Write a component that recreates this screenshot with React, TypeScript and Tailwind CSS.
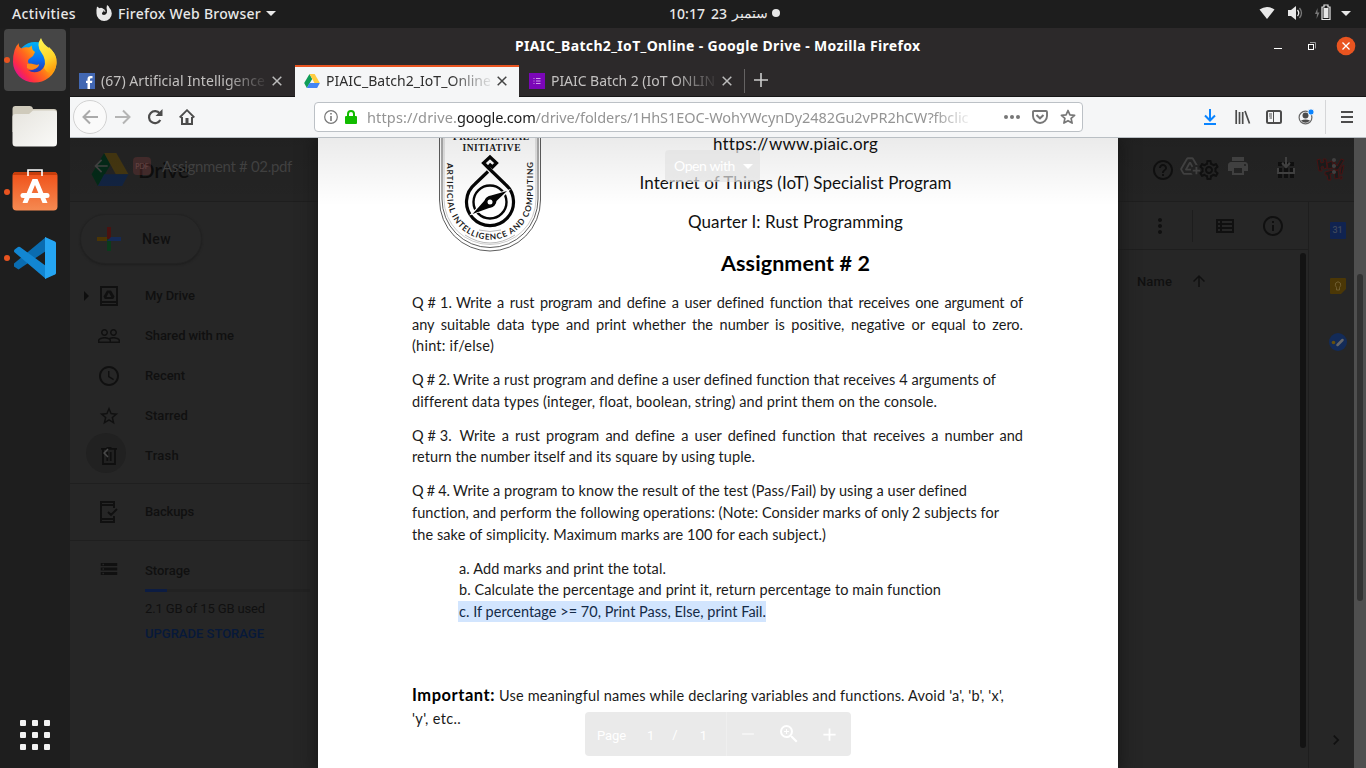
import { useLayoutEffect, useRef, type ReactNode } from "react";
import {
  MdAccessTime, MdAddToDrive, MdApps, MdArrowRight, MdArrowUpward, MdChevronRight,
  MdInfoOutline, MdHelpOutline, MdMoreVert, MdPeopleOutline, MdPrint,
  MdOutlineSettings, MdStarBorder, MdStorage, MdZoomIn, MdArrowBack, MdChevronLeft, MdAdd, MdRemove,
  MdArrowDropDown,
} from "react-icons/md";

/** Single line of text tracked so that it spans exactly `w` pixels. */
function Fit({ w, children, className = "" }: { w: number; children: ReactNode; className?: string }) {
  const ref = useRef<HTMLSpanElement>(null);
  useLayoutEffect(() => {
    const el = ref.current;
    if (!el) return;
    el.style.letterSpacing = "0px";
    const n = (el.textContent || "").length;
    el.style.letterSpacing = `${(w - el.getBoundingClientRect().width) / n}px`;
  }, [w]);
  return <span ref={ref} className={`inline-block whitespace-pre ${className}`}>{children}</span>;
}

function DriveLogo({ className }: { className: string }) {
  return (
    <svg viewBox="0 0 38 34" className={className}>
      <path d="M13 0 0 22l6.500 12L19.500 12z" fill="#0f9d58" />
      <path d="M13 0h12.500L38 22H25z" fill="#ffcd40" />
      <path d="M13 22h25l-6.500 12h-25z" fill="#4285f4" />
    </svg>
  );
}

function TopBar() {
  return (
    <div className="grid h-7 grid-cols-[600px_1fr_110px] items-center bg-[#1d1d1d] text-[14px] font-medium text-[#e8e8e8]">
      <div className="flex items-center pb-[2px] pl-3">
        <Fit w={64}>Activities</Fit>
        <svg viewBox="0 0 16 16" className="ml-5 size-4">
          <path fill="#e8e8e8" fillRule="evenodd" d="M1 1.500 3.500 3.300Q5 2.300 6.500 3.300L9 5 7 6.800Q5.500 7.800 6 9.300 8 10.500 9.500 9.500 11.500 8 11 5.500 10 4 11 0 13 1 13.500 3Q16 5 15.800 8.500A7.500 7.300 0 0 1 .5 8.500Q.3 4 1 1.500M7 6l2-1 .5 2z" />
        </svg>
        <Fit w={143} className="ml-[6px]">Firefox Web Browser</Fit>
        <svg viewBox="0 0 10 5" className="ml-[5px] h-[5px] w-[10px]"><path fill="#e8e8e8" d="M0 0h10L5 5z" /></svg>
      </div>
      <div className="flex items-center pb-[2px] pl-[69px]">
        <Fit w={36}>10:17</Fit>
        <Fit w={16} className="ml-[6px]">23</Fit>
        <span dir="rtl" className="ml-[5px] text-[13.500px] font-normal">ستمبر</span>
        <i className="ml-[4px] size-2 rounded-full bg-[#e8e8e8]" />
      </div>
      <svg viewBox="0 0 110 28" className="h-7 w-[110px]">
        <path d="M3.500 9.500Q11 4.500 18.500 9.500L11 19z" fill="#e8e8e8" />
        <path d="M32 10h3l5-4v14l-5-4h-3z" fill="#e8e8e8" />
        <path d="M41.500 10q2.500 3 0 6" stroke="#e8e8e8" fill="none" strokeWidth="1.300" />
        <path d="M43.500 8q4 5 0 10" stroke="#777" fill="none" strokeWidth="1.300" />
        <path d="M61.500 8 59 14h2l-.5 5 3-6.500h-2z" fill="#777" />
        <path d="M66 7h2V5h4v2h2v12.500h-8z" stroke="#e8e8e8" fill="none" strokeWidth="1.200" />
        <path d="M67.500 8h5v10h-5z" fill="#e8e8e8" />
        <path d="M85 11h10l-5 5z" fill="#e8e8e8" />
      </svg>
    </div>
  );
}

function FirefoxLogo() {
  return (
    <svg viewBox="0 0 44 46" className="h-[46px] w-11">
      <defs>
        <linearGradient id="fxBody" x1="1" y1=".1" x2=".1" y2=".8">
          <stop offset="0" stopColor="#fff44f" /><stop offset=".35" stopColor="#ffb40d" />
          <stop offset=".6" stopColor="#ff6a1c" /><stop offset=".85" stopColor="#ff2d43" /><stop offset="1" stopColor="#e31587" />
        </linearGradient>
        <linearGradient id="fxGlobe" x1="0" y1="0" x2="0" y2="1">
          <stop offset="0" stopColor="#00b3f4" /><stop offset=".5" stopColor="#0a6ef0" /><stop offset="1" stopColor="#3a1c8c" />
        </linearGradient>
        <linearGradient id="fxFlame" x1=".3" y1="0" x2=".6" y2="1">
          <stop offset="0" stopColor="#fff44f" /><stop offset=".6" stopColor="#ffd52a" /><stop offset="1" stopColor="#ff9a0d" />
        </linearGradient>
      </defs>
      <circle cx="22" cy="23" r="18" fill="url(#fxGlobe)" />
      <path fill="url(#fxBody)" d="M6 6Q5 10 8.500 11.500 12 9.500 16 10.500L19 8.500Q18 12 22 15L20 19 16 22Q14 24 16 27L25 28Q27 28 23 31.500 19 34 15 33 20 37 27 34 35 28 32 19L36 10Q44 17 43.500 27A21.800 20.500 0 0 1 0 25Q0 11 6 6" />
      <path fill="url(#fxFlame)" d="M28 1Q23 8 28 15q6 8 3 16 5 8 10 3 3-5 2.500-12Q42 15 36 11 30 7 28 1" />
      <path fill="#ff8a16" d="M14 27q4-1 7 .5 3 1 5-.5 0 3-4 4.500-4 2-8-.5z" />
    </svg>
  );
}

function DockItem({ running, active, children }: { running?: boolean; active?: boolean; children: ReactNode }) {
  return (
    <div className={`relative flex h-[62px] w-[62px] items-center justify-center rounded ${active ? "bg-[#464646]" : ""}`}>
      {running && <i className="absolute left-0 top-[28px] size-[6px] rounded-full bg-[#e95420]" />}
      {children}
    </div>
  );
}

function Dock() {
  return (
    <div className="flex w-[70px] shrink-0 flex-col items-center bg-[#1e1e1e] pt-px">
      <div className="flex flex-1 flex-col gap-1">
        <DockItem running active><FirefoxLogo /></DockItem>
        <DockItem>
          <svg viewBox="0 0 46 42" className="h-[42px] w-[46px]">
            <defs><linearGradient id="fold" x1="0" y1="0" x2="1" y2="1"><stop offset="0" stopColor="#e6e4de" /><stop offset="1" stopColor="#fafaf8" /></linearGradient></defs>
            <path d="M.5 4q0-3 3-3h14q3 0 3.500 3h21q3 0 3 3v20H.5z" fill="#cfcabb" />
            <path d="M.5 12q0-3 3-3H17l4-3.500h21q3 0 3 3V38q0 3.500-3.500 3.500H4Q.5 41.500.5 38z" fill="url(#fold)" />
          </svg>
        </DockItem>
        <DockItem running>
          <svg viewBox="0 0 46 42" className="mb-[4px] h-[42px] w-[46px]">
            <defs><linearGradient id="soft" x1="0" y1="0" x2="0" y2="1"><stop offset="0" stopColor="#f05018" /><stop offset="1" stopColor="#f58a52" /></linearGradient></defs>
            <rect x=".5" y="3" width="45" height="38.500" rx="4" fill="url(#soft)" />
            <path d="M1 6q0-3 3-3h38q3 0 3 3z" fill="#c73e0c" />
            <path d="M16 7V1h14v6" fill="none" stroke="#fff" strokeWidth="1.600" />
            <path d="M10.500 34 20.500 10h5l10 24h-5L23 16l-7.500 18z" fill="#fff" />
            <rect x="8.500" y="24" width="29" height="5" rx="2.500" fill="#fff" />
          </svg>
        </DockItem>
        <DockItem running>
          <svg viewBox="0 0 42 42" className="size-[42px]">
            <path d="M0 29.500 4.500 32.500 32 14V0L0 26.500z" fill="#0a6cb0" />
            <path d="M0 14q0-1 1-1.800L4 10q1-.5 2 0l26 19v13L.8 15.500Q0 15 0 14" fill="#1286d2" />
            <path d="M31 0 41 4.500q1 .5 1 1.500v30q0 1-1 1.500L31 42z" fill="#25a5f2" />
          </svg>
        </DockItem>
      </div>
      <div className="mb-[18px] grid grid-cols-3 gap-[6px]">
        {Array.from({ length: 9 }, (_, i) => <i key={i} className="size-[6px] rounded-[1px] bg-[#f4f4f4]" />)}
      </div>
    </div>
  );
}

function Close({ className }: { className: string }) {
  return <svg viewBox="0 0 10 10" className={`size-[10px] ${className}`}><path d="m.7.7 8.600 8.600M9.300.7.7 9.300" stroke="currentColor" strokeWidth="1.500" /></svg>;
}

function Tab({ icon, title, w, active }: { icon: ReactNode; title: string; w: number; active?: boolean }) {
  return (
    <div className={`flex h-8 items-center border-t-2 pb-px pl-[9px] text-[14px] ${active ? "w-[224px] border-[#e95420] bg-[#f5f6f7] text-[#2e2e2e]" : "w-[225px] border-transparent text-[#c3c1c0]"}`}>
      {icon}
      <span className="mb-px ml-[6px] w-[165px] overflow-hidden [mask-image:linear-gradient(to_right,#000_75%,transparent_102%)]"><Fit w={w}>{title}</Fit></span>
      <Close className={`ml-[6px] ${active ? "text-[#444]" : "text-[#bbb]"}`} />
    </div>
  );
}

function WindowHeader() {
  return (
    <div className="bg-[#2c292a]">
      <div className="flex h-[37px] items-center text-white">
        <div className="flex flex-1 pb-[2px] pl-[445px] text-[14px] font-bold"><Fit w={405.5}>PIAIC_Batch2_IoT_Online - Google Drive - Mozilla Firefox</Fit></div>
        <svg viewBox="0 0 100 37" className="h-[37px] w-[100px]">
          <path d="M8 20.500h8" stroke="#fff" />
          <path d="M44 14.500h5.500v6" fill="none" stroke="#999" />
          <rect x="42.500" y="16.500" width="5" height="5" fill="none" stroke="#fff" />
          <circle cx="80" cy="18" r="9.300" fill="#e95420" />
          <path d="m76.500 14.500 7 7m0-7-7 7" stroke="#fff" strokeWidth="1.300" />
        </svg>
      </div>
      <div className="flex h-8 items-center border-b border-[#161616] bg-[#2c292a]">
        <Tab w={164} title="(67) Artificial Intelligence" icon={<svg viewBox="0 0 16 16" className="size-4"><path fill="#4267b2" d="M0 0h16v16H0z" /><path fill="#fff" d="M8.500 16v-6H7V7.700h1.500V6q0-3 3-3h2v2.300H12q-1 0-1 1v1.400h2.400L13 10h-2v6z" /></svg>} />
        <Tab active w={165} title="PIAIC_Batch2_IoT_Online" icon={<DriveLogo className="h-[14px] w-4" />} />
        <Tab w={164} title="PIAIC Batch 2 (IoT ONLIN" icon={<svg viewBox="0 0 16 16" className="ml-px size-4"><path fill="#7b06b8" d="M0 0h16v16H0z" /><path stroke="#e6c8f5" strokeWidth=".8" d="M4.500 5.500h1M7 5.500h4.500M4.500 8h1M7 8h4.500M4.500 10.500h1M7 10.500h4.500" /></svg>} />
        <i className="h-6 w-px bg-[#656363]" />
        <svg viewBox="0 0 14 14" className="mb-px ml-[9px] size-[14px]"><path d="M7 0v14M0 7h14" stroke="#ccc" strokeWidth="1.600" /></svg>
      </div>
    </div>
  );
}

function Tool({ children }: { children: ReactNode }) {
  return <div className="flex w-8 shrink-0 justify-center">{children}</div>;
}

function NavBar() {
  return (
    <div className="flex h-[41px] items-center border-b border-[#b9bfc4] bg-[#f5f6f7] pl-[3px] text-[#4c4c4c]">
      <div className="flex size-[34px] items-center justify-center rounded-full border border-[#d2d2d2] bg-[#fafafa]">
        <svg viewBox="0 0 16 16" className="size-4"><path d="M16 8H1.500M8 1.500 1.500 8 8 14.500" fill="none" stroke="#aaa" strokeWidth="2" /></svg>
      </div>
      <Tool><svg viewBox="0 0 16 16" className="size-4"><path d="M0 8h14.500M8 1.500 14.500 8 8 14.500" fill="none" stroke="#b4b4b4" strokeWidth="2" /></svg></Tool>
      <Tool><svg viewBox="0 0 16 16" className="size-4"><path d="M12.800 4.500A6 6 0 1 0 13.300 11" fill="none" stroke="#4c4c4c" strokeWidth="2.200" /><path d="M15.500 0v7h-7z" fill="#4c4c4c" /></svg></Tool>
      <Tool><svg viewBox="0 0 16 16" className="size-4"><path d="M.7 8.500 8 1.200l7.300 7.300" fill="none" stroke="#4c4c4c" strokeWidth="1.800" /><path d="M3 8v7h10V8" fill="none" stroke="#4c4c4c" strokeWidth="2" /><path d="M6.500 15V9h3v6z" fill="#4c4c4c" /></svg></Tool>
      <div className="ml-[111px] flex h-[30px] w-[769px] items-center rounded border border-[#bcc1c6] bg-white pl-[9px] text-[14.500px] text-[#949494]">
        <svg viewBox="0 0 14 14" className="size-[14px]"><circle cx="7" cy="7" r="6.300" fill="none" stroke="#777" strokeWidth="1.200" /><path d="M6.200 3h1.600v1.600H6.200zM6.200 6h1.600v5H6.200z" fill="#777" /></svg>
        <svg viewBox="0 0 12 14" className="ml-[7px] h-[14px] w-3"><path d="M3 7V4a3 3 0 0 1 6 0v3" fill="none" stroke="#12bc00" strokeWidth="2" /><rect y="6" width="12" height="8" rx="1" fill="#12bc00" /></svg>
        <div className="ml-[10px] flex w-[602px] overflow-hidden pt-px [mask-image:linear-gradient(to_right,#000_94%,transparent_101%)]">
          <Fit w={90}>https://drive.</Fit><Fit w={78.5} className="text-[#1c1c1c]">google.com</Fit><Fit w={433}>/drive/folders/1HhS1EOC-WohYWcynDy2482Gu2vPR2hCW?fbclic</Fit>
        </div>
        <svg viewBox="0 0 16 4" className="ml-[35px] h-1 w-4"><circle cx="2" cy="2" r="2" fill="#777" /><circle cx="8" cy="2" r="2" fill="#777" /><circle cx="14" cy="2" r="2" fill="#777" /></svg>
        <svg viewBox="0 0 16 14" className="ml-3 h-[14px] w-4"><path d="M1 2q0-1 1-1h12q1 0 1 1v4a7 7 0 0 1-14 0z" fill="none" stroke="#777" strokeWidth="1.900" /><path d="m4.500 5 3.500 3.300L11.500 5" fill="none" stroke="#777" strokeWidth="2" /></svg>
        <svg viewBox="0 0 16 16" className="ml-3 size-4"><path d="m8 1.500 1.900 4.300 4.700.5-3.500 3.100 1 4.700L8 11.700 3.900 14.100l1-4.700L1.400 6.300l4.700-.5z" fill="none" stroke="#777" strokeWidth="1.700" strokeLinejoin="round" /></svg>
      </div>
      <div className="ml-[111px] flex items-center">
        <Tool><svg viewBox="0 0 12 16" className="h-4 w-3"><path d="M6 0v11M1 6.500l5 5 5-5M0 15h12" fill="none" stroke="#0a84ff" strokeWidth="2" /></svg></Tool>
        <Tool><svg viewBox="0 0 16 14" className="ml-px h-[14px] w-4"><path d="M1.200 0v14M4.500 2v12M7.700 2v12M10 1l4.500 12.500" fill="none" stroke="#4c4c4c" strokeWidth="1.700" /></svg></Tool>
        <Tool><svg viewBox="0 0 16 14" className="h-[14px] w-4"><rect x="1" y="1" width="14" height="12" rx="1.500" fill="none" stroke="#4c4c4c" strokeWidth="2" /><path d="M7.500 1v12M3 4h3M3 6h3M3.500 8H6" stroke="#4c4c4c" /></svg></Tool>
        <Tool><svg viewBox="0 0 16 16" className="size-4"><circle cx="7.500" cy="8.500" r="6.400" fill="none" stroke="#666" strokeWidth="1.200" /><circle cx="7.500" cy="6.500" r="3" fill="#4c4c4c" /><path d="M3 11.500q4.500-2 9 0-4.500 4.500-9 0" fill="#4c4c4c" /><circle cx="13" cy="3" r="3" fill="#0a84ff" stroke="#f5f6f7" strokeWidth=".8" /></svg></Tool>
        <i className="ml-[3px] h-[34px] w-px bg-[#d5d6d8]" />
        <div className="ml-[15px] flex flex-col gap-[3px]"><i className="h-[2px] w-3 bg-[#4c4c4c]" /><i className="h-[2px] w-3 bg-[#4c4c4c]" /><i className="h-[2px] w-3 bg-[#4c4c4c]" /></div>
      </div>
    </div>
  );
}

function SideRow({ icon, label, w, arrow }: { icon: ReactNode; label: string; w: number; arrow?: boolean }) {
  return (
    <div className="flex h-10 items-center">
      <span className="flex w-7 justify-end text-[#0e0e0e]">{arrow && <MdArrowRight className="size-6" />}</span>
      <span className="flex w-[22px] justify-center">{icon}</span>
      <Fit w={w} className="ml-[25px]">{label}</Fit>
    </div>
  );
}

/** Drive's file browser, as it looks below the viewer's shade. */
function DrivePage() {
  return (
    <div className="flex h-full w-[1284px] flex-col font-[Roboto,sans-serif] text-[13px] font-medium text-[#101010]">
      <div className="flex h-16 items-center border-b border-[#1e1e1e] bg-[#242424] pl-[21px]">
        <DriveLogo className="h-[33px] w-[38px] brightness-[.27]" />
        <span className="ml-[9px] font-[Lato,sans-serif] text-[22px] font-medium text-[#0d0d0d]"><Fit w={51}>Drive</Fit></span>
        <div className="flex flex-1 items-center pl-[962px]">
          <MdHelpOutline className="size-6 shrink-0" />
          <MdOutlineSettings className="ml-[22px] size-6 shrink-0" />
          <MdApps className="ml-[53px] size-6 shrink-0" />
          <svg viewBox="0 0 30 24" className="ml-[18px] h-6 w-[30px] shrink-0"><g fill="#1b1b1b" stroke="#4a1414" strokeWidth="1"><path d="m1 2 3-1 1 4 3-1-1-3 3 0 1 9-3 1-1-3-2 1 1 4-3 0zM11 5l5-2 1 7-5 1zM18 3l3 5 4-7 3 1-6 10-3 0zM9 14l8-2 0 3-3 1 1 6-3 0-1-5-2 0zM18 13l4-1 1 8-4 1zM25 9l3-2-2 9-2 0zM24 19l2-1 0 3-2 0z" /></g></svg>
        </div>
      </div>
      <div className="flex min-h-0 flex-1">
        <div className="w-[240px] pt-[12px]">
          <div className="ml-[10px] flex h-[50px] w-[122px] items-center rounded-full border border-[#222] bg-[#272727] pl-[16px] shadow-[0_1px_2px_#1e1e1e]">
            <svg viewBox="0 0 24 24" className="size-6"><path d="M10 0h4v12h-4z" fill="#4a1210" /><path d="M10 12h4v12h-4z" fill="#0b3b1c" /><path d="M0 10h10v4H0z" fill="#4b3505" /><path d="M14 10h10v4H10z" fill="#152a56" /></svg>
            <Fit w={29} className="ml-[21px] text-[14px]">New</Fit>
          </div>
          <div className="mt-[12px] flex flex-col">
            <SideRow arrow w={50} label="My Drive" icon={<svg viewBox="0 0 18 20" className="h-5 w-[18px]"><path d="M1 1h16v18H1zM1 16h16" fill="none" stroke="currentColor" strokeWidth="1.800" /><path d="m7 4.500-3.500 6 1.300 2.500h8.400l1.300-2.500-3.500-6zm1.800 2 2.500 4.500H6.500z" fill="currentColor" fillRule="evenodd" /></svg>} />
            <SideRow w={89} label="Shared with me" icon={<MdPeopleOutline className="size-6 shrink-0" />} />
            <SideRow w={40} label="Recent" icon={<MdAccessTime className="size-6 shrink-0" />} />
            <SideRow w={43} label="Starred" icon={<MdStarBorder className="size-[22px]" />} />
            <SideRow w={34} label="Trash" icon={<svg viewBox="0 0 16 18" className="h-[18px] w-4"><path d="M0 1.800h16M5.500 1h5M2 2v15h12V2M6.300 5v9M9.700 5v9" fill="none" stroke="currentColor" strokeWidth="1.800" /></svg>} />
          </div>
          <div className="mt-[7px] border-y border-[#1f1f1f] py-[8px]">
            <SideRow w={49} label="Backups" icon={<svg viewBox="0 0 18 22" className="h-[22px] w-[18px]"><path d="M14 7V1H1v20h13v-6M1 4h13M1 18h13M8 11l3 3 6-6" fill="none" stroke="currentColor" strokeWidth="1.900" /></svg>} />
          </div>
          <div className="flex pl-[30px] pt-5">
            <MdStorage className="mt-[-3px] size-[22px] w-[18px] scale-x-110" />
            <div className="ml-[27px] flex-1 leading-5">
              <Fit w={45}>Storage</Fit>
              <div className="mt-[8px] h-[3px] w-[165px] bg-[#222]"><div className="h-full w-[22px] bg-[#0c1c42]" /></div>
              <Fit w={120} className="mt-[7px] font-normal">2.1 GB of 15 GB used</Fit>
              <Fit w={119} className="mt-[5px] text-[#07193a]">UPGRADE STORAGE</Fit>
            </div>
          </div>
        </div>
        <div className="flex flex-1 flex-col pl-[808px]">
          <div className="flex h-12 items-center border-b border-[#1e1e1e] pl-[30px]">
            <MdMoreVert className="size-6" />
            <i className="ml-5 h-8 w-px bg-[#1d1d1d]" />
            <svg viewBox="0 0 18 14" className="ml-[23px] h-[14px] w-[18px]"><path d="M0 0h18v14H0zM2 2v2h2V2zm4 0v2h10V2zM2 6v2h2V6zm4 0v2h10V6zM2 10v2h2v-2zm4 0v2h10v-2z" fill="currentColor" fillRule="evenodd" /></svg>
            <MdInfoOutline className="ml-[27px] size-6" />
          </div>
          <div className="flex min-h-0 flex-1 justify-between">
            <div className="flex h-[63px] items-center pl-[19px]"><Fit w={35}>Name</Fit><MdArrowUpward className="mb-px ml-[18px] size-[18px]" /></div>
            <i className="mr-[2px] mt-[3px] h-[495px] w-[6px] rounded-full bg-[#131313]" />
          </div>
        </div>
        <div className="flex w-[46px] flex-col items-center border-l border-[#1e1e1e] pl-[12px] pt-5">
          <span className="flex h-[17px] w-4 items-center justify-center rounded-[1px] bg-[#102350] text-[9px] text-[#3e485c]">31</span>
          <svg viewBox="0 0 16 16" className="mt-[39px] size-4"><path d="M1 0h14q1 0 1 1v10l-5 5H1q-1 0-1-1V1q0-1 1-1" fill="#4b3706" /><path d="M6.500 9.500Q4.500 7.500 5.700 5q2.300-2.500 4.600 0 1.200 2.500-.8 4.500v2.500h-3z" fill="none" stroke="#77663a" strokeWidth=".8" /></svg>
          <svg viewBox="0 0 18 18" className="mt-[39px] size-[18px] shrink-0"><circle cx="9" cy="9" r="9" fill="#132b58" /><path d="m8.500 12 5-5" stroke="#66676a" strokeWidth="2.500" strokeLinecap="round" /><circle cx="4.500" cy="9.500" r="1.800" fill="#67500b" /></svg>
          <div className="flex-1" />
          <MdChevronRight className="mb-[18px] mr-[3px] size-5" />
        </div>
      </div>
    </div>
  );
}

function Emblem() {
  return (
    <svg viewBox="424 138 132 130" className="h-[130px] w-[132px]">
      <g fill="none" stroke="#333" strokeWidth=".8">
        <path d="M439.500 138v62a50.500 51 0 0 0 101 0v-62M442 138v61a48 48.500 0 0 0 96 0v-61" />
        <path d="M444 138v61a46 45.500 0 0 0 92 0v-61" stroke="#999" strokeWidth=".5" />
        <path d="M465 235q25 16 50 0M479 230q11 3 22 0" stroke="#888" strokeWidth=".6" />
      </g>
      <g fontFamily="Liberation Serif" fontWeight="700" fill="#222" textAnchor="middle">
        <text x="491" y="139.800" fontSize="9.500" textLength="76">PRESIDENTIAL</text>
        <text x="491.500" y="150.500" fontSize="9.500" textLength="58">INITIATIVE</text>
      </g>
      <path id="rim" d="M447.300 163v34a42.700 42.700 0 0 0 85.400 0v-36" fill="none" />
      <text fontFamily="Lato" fontWeight="700" fontSize="8.200" fill="#1b1b1b"><textPath href="#rim" textLength="203">ARTIFICIAL INTELLIGENCE AND COMPUTING</textPath></text>
      <g fill="none" stroke="#050505">
        <path d="m488 171.500-13 12.500A23.500 23.500 0 1 0 505 184l-16-15.500-5.500-5.500 6.500-6 6.500 6-4 4-3.500-3" strokeWidth="3.200" />
        <circle cx="490" cy="202" r="16.500" strokeWidth="2.400" />
      </g>
      <path d="m472.500 213.500 13-13.500 4.500-4 17.500-5L495 204l-4.500 4z" stroke="#fff" fill="#fff" strokeWidth="2" />
      <path d="M472.500 214 485 200q1.500-4 6-4.500L507 191l-10.500 10q-.5 5-6 6.500z" fill="#050505" />
      <circle cx="490" cy="202" r="5.500" fill="#050505" />
      <circle cx="490" cy="202" r="2.500" fill="#fff" />
    </svg>
  );
}

function DocumentPage() {
  const justify = "text-justify [text-align-last:justify]";
  return (
    <div className="h-[630px] w-[800px] bg-white font-[Lato,sans-serif] text-[14.500px] leading-[21.600px] text-[#1a1a1a] [font-variant-ligatures:none]">
      <div className="flex h-[154px] pl-[106px]">
        <Emblem />
        <div className="flex flex-1 flex-col items-center pr-[83px] text-[17px] leading-6 text-[#111]">
          <div className="mt-[-6px]"><Fit w={165}>https://www.piaic.org</Fit></div>
          <div className="mt-[14.500px]"><Fit w={312}>Internet of Things (IoT) Specialist Program</Fit></div>
          <div className="mt-[15px]"><Fit w={215}>Quarter I: Rust Programming</Fit></div>
          <div className="mt-[17px] text-[21.500px] font-bold text-black"><Fit w={149}>Assignment # 2</Fit></div>
        </div>
      </div>
      <div className="flex flex-col gap-[12.400px] pl-[94px]">
        <div>
          <p className="flex w-[611px]"><Fit w={44}>Q # 1. </Fit><span className={`flex-1 whitespace-nowrap tracking-[-0.1px] ${justify}`}>Write a rust program and define a user defined function that receives one argument of</span></p>
          <p className={`w-[611px] whitespace-nowrap ${justify}`}>any suitable data type and print whether the number is positive, negative or equal to zero.</p>
          <p><Fit w={82}>(hint: if/else)</Fit></p>
        </div>
        <div>
          <p><Fit w={41}>Q # 2. </Fit><Fit w={543}>Write a rust program and define a user defined function that receives 4 arguments of</Fit></p>
          <p><Fit w={525}>different data types (integer, float, boolean, string) and print them on the console.</Fit></p>
        </div>
        <div>
          <p className="flex w-[611px]"><Fit w={47.5}>Q # 3.  </Fit><span className={`flex-1 whitespace-nowrap ${justify}`}>Write a rust program and define a user defined function that receives a number and</span></p>
          <p><Fit w={343}>return the number itself and its square by using tuple.</Fit></p>
        </div>
        <div>
          <p><Fit w={41}>Q # 4. </Fit><Fit w={514}>Write a program to know the result of the test (Pass/Fail) by using a user defined</Fit></p>
          <p><Fit w={587}>function, and perform the following operations: (Note: Consider marks of only 2 subjects for</Fit></p>
          <p><Fit w={414}>the sake of simplicity. Maximum marks are 100 for each subject.)</Fit></p>
        </div>
        <div className="pl-[47px]">
          <p><Fit w={207}>a. Add marks and print the total.</Fit></p>
          <p><Fit w={482}>b. Calculate the percentage and print it, return percentage to main function</Fit></p>
          <p className="ml-[-1px] w-[308px] bg-[#d2e5fe] pl-px text-[#152b47]"><Fit w={307}>c. If percentage &gt;= 70, Print Pass, Else, print Fail.</Fit></p>
        </div>
        <div className="mt-[49px] leading-[23.500px]">
          <p><Fit w={83} className="text-[16.500px] font-bold text-black">Important:</Fit><Fit w={505} className="ml-[4px]">Use meaningful names while declaring variables and functions. Avoid 'a', 'b', 'x',</Fit></p>
          <p><Fit w={49}>'y', etc..</Fit></p>
        </div>
      </div>
    </div>
  );
}

function Viewer() {
  return (
    <>
      <div className="absolute left-[248px] top-0 shadow-[0_0_14px_4px_#1a1a1a]"><DocumentPage /></div>
      <div className="absolute left-0 top-0 h-[68px] w-[1284px] bg-gradient-to-b from-black/8 to-transparent" />
      <div className="absolute left-0 top-[12px] flex h-8 w-[1284px] items-center font-[Lato,sans-serif] text-[15px] text-[#404040]">
        <MdArrowBack className="ml-[21px] size-5 shrink-0" />
        <span className="ml-[22px] flex size-[18px] shrink-0 items-center justify-center rounded-sm bg-[#7a3838]/35 text-[7px] text-[#6a4848]">PDF</span>
        <Fit w={130} className="ml-[11px]">Assignment # 02.pdf</Fit>
        <div className="ml-[373px] flex h-8 w-[95px] shrink-0 items-center rounded-sm bg-[#e3e3e3]/70 pb-px pl-[9px] text-[14px] text-white"><Fit w={61}>Open with</Fit><MdArrowDropDown className="ml-px size-6" /></div>
        <MdAddToDrive className="ml-[419px] size-[22px] shrink-0" />
        <MdPrint className="ml-[25px] size-6 shrink-0" />
        <svg viewBox="0 0 20 18" className="ml-[26px] h-[18px] w-5 shrink-0"><path d="M10 0v9M6 6l4 4 4-4M2 11v5h16v-5" fill="none" stroke="currentColor" strokeWidth="2" /></svg>
        <MdMoreVert className="ml-[26px] size-6 shrink-0" />
      </div>
      <div className="absolute left-4 top-[295px] flex size-10 items-center justify-center rounded-full bg-[#101010]/20 text-[#4a4a4a]"><MdChevronLeft className="size-[18px]" /></div>
      <div className="absolute left-[515px] top-[574px] flex h-11 w-[266px] items-center rounded-sm bg-[#eaeaea] font-[Roboto,sans-serif] text-[13px] text-white">
        <Fit w={29} className="ml-3 mt-[3px]">Page</Fit>
        <span className="ml-[21px] mt-[3px]">1</span><span className="ml-[18px] mt-[2px]">/</span><span className="ml-[22px] mt-[3px]">1</span>
        <i className="ml-[19px] h-11 w-px bg-[#efefef]" />
        <MdRemove className="ml-[11px] size-5 opacity-60" />
        <MdZoomIn className="ml-[19px] size-6" />
        <MdAdd className="ml-[18px] size-[21px]" />
      </div>
    </>
  );
}

export default function App() {
  return (
    <div className="flex h-[768px] w-[1366px] flex-col overflow-hidden bg-[#1e1e1e] font-['Noto_Sans',sans-serif]">
      <TopBar />
      <div className="flex min-h-0 flex-1">
        <Dock />
        <div className="flex flex-1 flex-col">
          <WindowHeader />
          <NavBar />
          <div className="relative flex min-h-0 flex-1 overflow-hidden bg-[#262626]">
            <DrivePage />
            <div className="w-3 bg-[#4f4f4f] pl-[3px] pt-[136px]"><div className="h-[327px] w-[6px] rounded-full bg-[#323232]" /></div>
            <Viewer />
          </div>
        </div>
      </div>
    </div>
  );
}
